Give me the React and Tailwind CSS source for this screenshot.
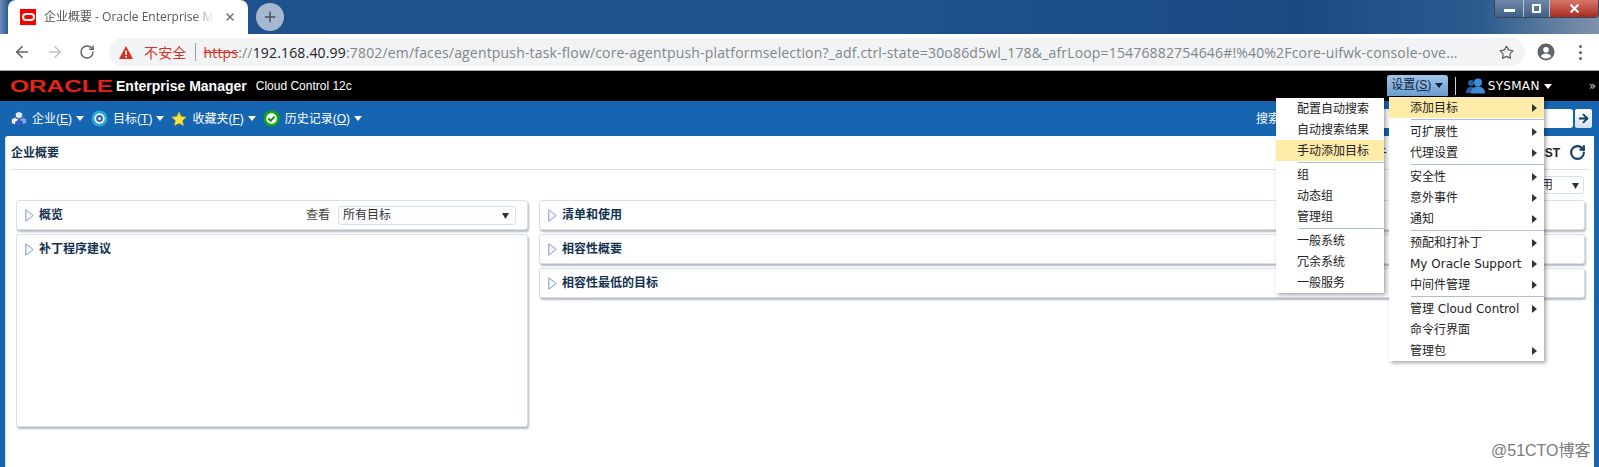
import React from "react";
import { ArrowLeft, ArrowRight, RotateCw, Star, X, Plus } from "lucide-react";

const font = "font-['DejaVu_Sans','Noto_Sans_CJK_SC',sans-serif]";

const Caret = ({ className = "" }) => (
  <svg width="8" height="5" viewBox="0 0 8 5" className={className}>
    <path d="M0 0h8L4 5z" fill="currentColor" />
  </svg>
);

const NavLink = ({ icon, label, hotkey, className = "" }) => (
  <div className={`flex items-center ${className}`}>
    {icon}
    <span className="ml-[5px] text-white text-[12px] whitespace-nowrap font-['Liberation_Sans','Noto_Sans_CJK_SC',sans-serif]">
      {label}(<u>{hotkey}</u>)
    </span>
    <Caret className="ml-[4px] text-white" />
  </div>
);

const CubesIcon = () => (
  <svg width="16" height="16" viewBox="0 0 16 16">
    <path d="M8 .5l3.500 1.800v3.600L8 7.700 4.500 5.900V2.300z" fill="#dfeafa" stroke="#24509a" strokeWidth="0.5" />
    <path d="M4 6.500l3.500 1.800v3.600L4 13.700.5 11.900V8.300z" fill="#f2f6fd" stroke="#24509a" strokeWidth="0.5" />
    <path d="M12 6.500l3.500 1.800v3.600L12 13.700l-3.500-1.800V8.300z" fill="#7fa8e6" stroke="#24509a" strokeWidth="0.5" />
    <path d="M8 9l3.500 1.800v3.400L8 16l-3.500-1.800v-3.400z" fill="#2f62c5" stroke="#1b3d7a" strokeWidth="0.5" />
  </svg>
);

const TargetIcon = () => (
  <svg width="17" height="17" viewBox="0 0 17 17">
    <circle cx="8.500" cy="8.500" r="8" fill="#28a6dc" />
    <circle cx="8.500" cy="8.500" r="5.200" fill="#f4fbff" />
    <circle cx="8.500" cy="8.500" r="3.400" fill="#3c5fa8" />
    <circle cx="8.500" cy="8.500" r="1.500" fill="#e6f2fb" />
  </svg>
);

const StarIcon = () => (
  <svg width="16" height="16" viewBox="0 0 16 16">
    <path d="M8 .8l2.200 4.700 5.100.6-3.800 3.500 1 5.100L8 12.200l-4.500 2.500 1-5.100L.7 6.100l5.100-.6z" fill="#f6e33c" stroke="#c9a612" strokeWidth="0.5" />
  </svg>
);

const CheckIcon = () => (
  <svg width="17" height="17" viewBox="0 0 17 17">
    <circle cx="8.500" cy="8.500" r="8" fill="#0fa80f" />
    <circle cx="8.500" cy="8.500" r="5.400" fill="#f2fff2" />
    <path d="M5.500 8.500l2.200 2.200 3.800-4" fill="none" stroke="#0b8a0b" strokeWidth="1.800" />
  </svg>
);

const PersonIcon = () => (
  <svg width="19" height="16" viewBox="0 0 19 16">
    <circle cx="5" cy="5" r="3" fill="#1f5ea8" />
    <path d="M0 15c0-4 2-6 5-6s5 2 5 6z" fill="#1f5ea8" />
    <circle cx="12" cy="4.500" r="4" fill="#3f8bd6" />
    <path d="M5 15.500c0-5 3-7 7-7s7 2 7 7z" fill="#3f8bd6" />
  </svg>
);

const Panel = ({ title, children, className = "h-[30px]" }) => (
  <div className={`bg-white border border-[#d6e1ee] rounded-[3px] shadow-[1px_2px_2px_rgba(90,100,115,0.45)] ${className}`}>
    <div className="h-[28px] flex items-center pl-[8px] pr-[11px]">
      <svg width="9" height="13" viewBox="0 0 9 13" className="shrink-0">
        <path d="M.8.8L8.200 6.500.8 12.200z" fill="#f5f8fc" stroke="#7f9dc2" />
      </svg>
      <span className="ml-[5px] text-[12px] font-bold text-[#12324e]">{title}</span>
      {children}
    </div>
  </div>
);

const MenuRow = ({ label, arrow, active, pad }) => (
  <div className={`h-[21px] flex items-center justify-between pr-[7px] ${pad} ${active ? "bg-[#feeca8]" : ""}`}>
    <span className="text-[12px] leading-none text-[#222] whitespace-nowrap">{label}</span>
    {arrow && (
      <svg width="5" height="8" viewBox="0 0 5 8">
        <path d="M0 0l5 4-5 4z" fill="#333" />
      </svg>
    )}
  </div>
);

const MenuSep = ({ indent }) => (
  <div className={`h-[3px] flex items-center ${indent}`}>
    <div className="h-px w-full bg-[#a9bfd9]" />
  </div>
);

const leftMenu = [
  ["配置自动搜索"],
  ["自动搜索结果"],
  ["手动添加目标", true],
  null,
  ["组"],
  ["动态组"],
  ["管理组"],
  null,
  ["一般系统"],
  ["冗余系统"],
  ["一般服务"],
];

const rightMenu = [
  ["添加目标", true, true],
  null,
  ["可扩展性", true],
  ["代理设置", true],
  null,
  ["安全性", true],
  ["意外事件", true],
  ["通知", true],
  null,
  ["预配和打补丁", true],
  ["My Oracle Support", true],
  ["中间件管理", true],
  null,
  ["管理 Cloud Control", true],
  ["命令行界面"],
  ["管理包", true],
];

export default function App() {
  return (
    <div className={`relative w-[1599px] h-[467px] overflow-hidden flex flex-col bg-white ${font}`}>
      {/* browser tab strip */}
      <div className="h-[34px] shrink-0 flex bg-[linear-gradient(90deg,#6f8db8_0px,#1f4f8c_10px,#1f548f_800px,#1a4a82_1300px,#2a5a8e_1480px,#7f93aa_1599px)] pl-[8px]">
        <div className="w-[240px] h-[34px] bg-white rounded-t-[8px] flex items-center pl-[12px]">
          <div className="w-[16px] h-[16px] bg-[#f80000] flex items-center justify-center shrink-0">
            <div className="w-[13px] h-[8px] rounded-full border-2 border-white" />
          </div>
          <span className="ml-[8px] w-[176px] overflow-hidden whitespace-nowrap text-[12px] text-[#555] font-['Open_Sans','Noto_Sans_CJK_SC',sans-serif] [mask-image:linear-gradient(90deg,#000_150px,transparent_170px)]">
            企业概要 - Oracle Enterprise M
          </span>
          <X size={12} strokeWidth={2.4} className="ml-[4px] text-[#5f6368]" />
        </div>
        <div className="ml-[8px] mt-[3px] w-[28px] h-[28px] rounded-full bg-[#a6b8d0] flex items-center justify-center">
          <Plus size={16} strokeWidth={2.2} className="text-[#444f5e]" />
        </div>
        <div className="ml-auto h-[18px] w-[105px] flex border border-t-0 border-[#39465a] rounded-b-[4px] overflow-hidden">
          <div className="w-[29px] bg-[linear-gradient(#7088a6,#3f5f88)] border-r border-[#b8c4d4] flex items-center justify-center">
            <div className="w-[11px] h-[3px] mt-[4px] bg-white" />
          </div>
          <div className="w-[26px] bg-[linear-gradient(#7088a6,#3f5f88)] border-r border-[#b8c4d4] flex items-center justify-center">
            <div className="w-[9px] h-[9px] border-2 border-white" />
          </div>
          <div className="flex-1 bg-[linear-gradient(#d8766a,#a82c22)] flex items-center justify-center">
            <X size={13} strokeWidth={4} className="text-white" />
          </div>
        </div>
      </div>

      {/* browser toolbar */}
      <div className="h-[37px] shrink-0 flex items-center bg-white border-b border-[#a9a9a9]">
        <ArrowLeft size={18} strokeWidth={2.2} className="ml-[13px] text-[#5f6368]" />
        <ArrowRight size={18} strokeWidth={2.2} className="ml-[15px] text-[#bdc1c6]" />
        <RotateCw size={16} strokeWidth={2.2} className="ml-[15px] text-[#5f6368]" />
        <div className="ml-[14px] w-[1416px] h-[28px] rounded-full bg-[#f1f3f4] flex items-center pl-[10px] text-[14px] tracking-[0.17px] whitespace-nowrap overflow-hidden font-['Open_Sans','Noto_Sans_CJK_SC',sans-serif]">
          <svg width="14" height="13" viewBox="0 0 14 13" className="shrink-0">
            <path d="M7 0l7 13H0z" fill="#d93025" />
            <rect x="6.200" y="4.500" width="1.600" height="4.500" fill="#fff" />
            <rect x="6.200" y="10" width="1.600" height="1.600" fill="#fff" />
          </svg>
          <span className="ml-[11px] text-[#d93025]">不安全</span>
          <span className="ml-[8px] w-px h-[18px] bg-[#9aa0a6]" />
          <span className="ml-[8px] text-[#d93025] line-through">https</span>
          <span className="text-[#80868b]">://</span>
          <span className="text-[#202124]">192.168.40.99</span>
          <span className="text-[#80868b]">:7802/em/faces/agentpush-task-flow/core-agentpush-platformselection?_adf.ctrl-state=30o86d5wl_178&amp;_afrLoop=15476882754646#!%40%2Fcore-uifwk-console-ove...</span>
        </div>
        <Star size={15} strokeWidth={2} className="ml-[-26px] text-[#5f6368]" />
        <svg width="18" height="18" viewBox="0 0 18 18" className="ml-[23px]">
          <circle cx="9" cy="9" r="8.500" fill="#5f6368" />
          <circle cx="9" cy="6.800" r="2.800" fill="#fff" />
          <path d="M3.800 13.200c1-2 3-2.800 5.200-2.800s4.200.8 5.200 2.800c-1.300 1.500-3.100 2.300-5.200 2.300s-3.900-.8-5.200-2.300z" fill="#fff" />
        </svg>
        <div className="ml-[24px] flex flex-col gap-[3px]">
          <div className="w-[3px] h-[3px] rounded-full bg-[#5f6368]" />
          <div className="w-[3px] h-[3px] rounded-full bg-[#5f6368]" />
          <div className="w-[3px] h-[3px] rounded-full bg-[#5f6368]" />
        </div>
      </div>

      {/* EM header */}
      <div className="h-[30px] shrink-0 bg-black flex items-center text-white">
        <svg width="106" height="16" viewBox="0 0 106 16" className="ml-[9px] shrink-0">
          <text x="1" y="14" fontSize="16" fontWeight="bold" fill="#e3231b" textLength="103" lengthAdjust="spacingAndGlyphs" fontFamily="Liberation Sans">ORACLE</text>
        </svg>
        <span className="ml-[1px] text-[14px] font-bold font-['Liberation_Sans',sans-serif] whitespace-nowrap">Enterprise Manager</span>
        <span className="ml-[9px] text-[12px] font-['Liberation_Sans',sans-serif] whitespace-nowrap">Cloud Control 12c</span>
        <div className="ml-auto flex items-center h-full">
          <div className="w-[61px] h-[21px] mt-[-2px] rounded-t-[3px] bg-[linear-gradient(#a4c6e8,#6a9dd0)] flex items-center justify-center text-[#10243a] text-[12px] font-['Liberation_Sans','Noto_Sans_CJK_SC',sans-serif]">
            设置(<u>S</u>)
            <Caret className="ml-[4px] text-[#10243a]" />
          </div>
          <div className="ml-[7px] w-px h-[18px] bg-[#d0d0d0]" />
          <div className="ml-[10px]"><PersonIcon /></div>
          <span className="ml-[3px] text-[12px] tracking-[0.3px]">SYSMAN</span>
          <Caret className="ml-[4px] text-white" />
          <span className="ml-[37px] mr-[3px] text-[12px] text-[#ccc]">»</span>
        </div>
      </div>

      {/* EM body */}
      <div className="flex-1 bg-[#1565b0] flex flex-col">
        <div className="h-[35px] shrink-0 flex items-center pl-[11px]">
          <NavLink icon={<CubesIcon />} label="企业" hotkey="E" />
          <NavLink icon={<TargetIcon />} label="目标" hotkey="T" className="ml-[7px]" />
          <NavLink icon={<StarIcon />} label="收藏夹" hotkey="F" className="ml-[7px]" />
          <NavLink icon={<CheckIcon />} label="历史记录" hotkey="O" className="ml-[7px]" />
          <div className="ml-auto flex items-center pr-[7px]">
            <span className="text-white text-[12px]">搜索目标</span>
            <div className="ml-[4px] w-[265px] h-[19px] rounded-[3px] bg-white" />
            <div className="ml-[2px] w-[17px] h-[19px] rounded-[2px] bg-[linear-gradient(#fff,#d5dfeb)] flex items-center justify-center">
              <ArrowRight size={13} strokeWidth={3.4} className="text-[#123f5e]" />
            </div>
          </div>
        </div>

        {/* page */}
        <div className="flex-1 ml-[5px] mr-[5px] bg-white border-l border-[#d3e2f2] rounded-tl-[3px]">
          <div className="h-[34px] mx-[5px] flex items-center justify-between border-b border-[#d8e0e9] pr-[3px]">
            <span className="text-[12px] font-bold text-[#12324e]">企业概要</span>
            <div className="flex items-center">
              <span className="text-[12px] text-[#333] mr-[149px]">午</span>
              <span className="text-[12px] font-bold text-[#222] font-['Liberation_Sans',sans-serif]">CST</span>
              <RotateCw size={17} strokeWidth={3} className="ml-[9px] text-[#12406a]" />
            </div>
          </div>
          <div className="h-[18px] mt-[6px] flex justify-end pr-[10px]">
            <div className="w-[60px] h-[18px] rounded-[3px] border border-[#d6e1ee] flex items-center justify-between px-[4px] text-[12px] text-[#333]">
              <span>使用</span>
              <svg width="7" height="7" viewBox="0 0 7 7"><path d="M0 1h7L3.500 7z" fill="#333" /></svg>
            </div>
          </div>
          <div className="flex gap-[11px] pl-[10px] pr-[9px] mt-[6px]">
            <div className="w-[512px] flex flex-col gap-[4px]">
              <Panel title="概览">
                <span className="ml-auto text-[12px] text-[#444]">查看</span>
                <div className="ml-[8px] w-[178px] h-[19px] rounded-[3px] border border-[#d6e1ee] bg-[#fbfdff] flex items-center justify-between pl-[4px] pr-[6px]">
                  <span className="text-[12px] text-[#333]">所有目标</span>
                  <svg width="7" height="7" viewBox="0 0 7 7"><path d="M0 1h7L3.500 7z" fill="#333" /></svg>
                </div>
              </Panel>
              <Panel title="补丁程序建议" className="h-[193px]" />
            </div>
            <div className="flex-1 flex flex-col gap-[4px]">
              <Panel title="清单和使用" />
              <Panel title="相容性概要" />
              <Panel title="相容性最低的目标" />
            </div>
          </div>
        </div>
      </div>

      {/* dropdown menus */}
      <div className="absolute left-[1276px] top-[98px] w-[108px] bg-white shadow-[2px_2px_4px_rgba(0,0,0,0.35)]">
        {leftMenu.map((m, i) =>
          m ? (
            <MenuRow key={i} label={m[0]} active={m[1]} pad="pl-[21px]" />
          ) : (
            <MenuSep key={i} indent="pl-[22px]" />
          )
        )}
      </div>
      <div className="absolute left-[1389px] top-[97px] w-[155px] bg-white shadow-[2px_2px_4px_rgba(0,0,0,0.35)]">
        {rightMenu.map((m, i) =>
          m ? (
            <MenuRow key={i} label={m[0]} arrow={m[1]} active={m[2]} pad="pl-[21px]" />
          ) : (
            <MenuSep key={i} indent="pl-[22px]" />
          )
        )}
      </div>

      {/* watermark */}
      <span className="absolute left-[1491px] top-[439px] text-[16px] text-[#7a7a7a] whitespace-nowrap font-['Liberation_Sans','Noto_Sans_CJK_SC',sans-serif]">
        @51CTO博客
      </span>
    </div>
  );
}
